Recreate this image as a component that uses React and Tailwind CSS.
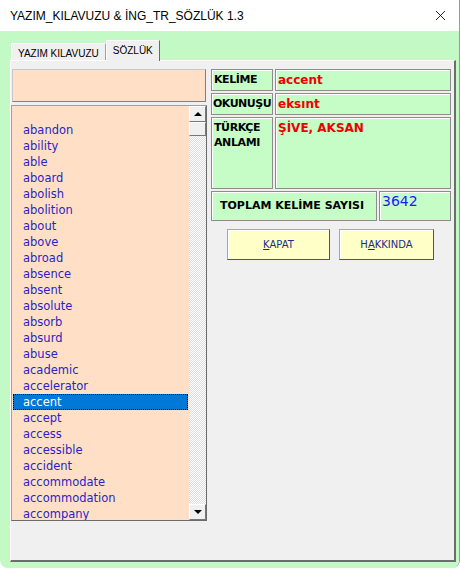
import { X } from 'lucide-react';

const words = [
  '',
  'abandon',
  'ability',
  'able',
  'aboard',
  'abolish',
  'abolition',
  'about',
  'above',
  'abroad',
  'absence',
  'absent',
  'absolute',
  'absorb',
  'absurd',
  'abuse',
  'academic',
  'accelerator',
  'accent',
  'accept',
  'access',
  'accessible',
  'accident',
  'accommodate',
  'accommodation',
  'accompany',
];

const tahoma = "font-['DejaVu_Sans',sans-serif]";

const Cell = ({ className = '', children }) => (
  <div
    className={`border border-[#8c8c8c] bg-[#c6fcc6] shadow-[inset_1px_1px_0_#ffffff] ${className}`}
  >
    {children}
  </div>
);

const WordList = () => (
  <div className="relative mt-[3px] h-[416px] w-[196px] overflow-hidden border border-[#a0a0a0] border-b-[#6a6a6a] border-r-[#6a6a6a] bg-[#ffe0c6]">
    <div className={`pl-[1px] pr-[18px] ${tahoma} text-[11.5px] leading-4 text-[#2a1fc9]`}>
      {words.map((word, index) => (
        <div
          key={`${word}-${index}`}
          className={
            word === 'accent'
              ? 'h-4 border border-dotted border-black bg-[#0078d7] pl-[9px] leading-[14px] text-white'
              : 'h-4 pl-[10px]'
          }
        >
          {word}
        </div>
      ))}
    </div>
    <div className="absolute right-0 top-0 flex h-full w-[17px] flex-col bg-[repeating-conic-gradient(#ffffff_0_25%,#dcdcdc_0_50%)] bg-[length:2px_2px]">
      <div className="flex h-[16px] items-center justify-center border border-white border-b-[#777] border-r-[#777] bg-[#f0f0f0]">
        <span className="h-0 w-0 border-x-[4px] border-b-[4px] border-x-transparent border-b-black" />
      </div>
      <div className="h-[14px] border border-white border-b-[#777] border-r-[#777] bg-[#f0f0f0]" />
      <div className="flex-1" />
      <div className="flex h-[16px] items-center justify-center border border-white border-b-[#777] border-r-[#777] bg-[#f0f0f0]">
        <span className="h-0 w-0 border-x-[4px] border-t-[4px] border-x-transparent border-t-black" />
      </div>
    </div>
  </div>
);

const Button = ({ width, hotkey, rest, before = '' }) => (
  <button
    type="button"
    className={`${width} h-[31px] border border-[#a8a8a8] border-b-[#555] border-r-[#555] bg-[#ffffc8] shadow-[inset_1px_1px_0_#ffffff] ${tahoma} text-[10px] text-[#1e2a8c]`}
  >
    {before}
    <span className="underline">{hotkey}</span>
    {rest}
  </button>
);

export default function App() {
  return (
    <div className="h-[569px] w-[460px] overflow-hidden bg-white">
      <div className="flex h-[568px] w-[460px] flex-col overflow-hidden rounded-b-[8px] border-r border-[#9a9a9a]">
        <div className="flex h-[31px] items-center justify-between bg-white pl-[10px] pr-[10px] font-['Liberation_Sans',sans-serif] text-[12px] text-black">
          <span>YAZIM_KILAVUZU &amp; İNG_TR_SÖZLÜK 1.3</span>
          <X size={17} strokeWidth={1.2} />
        </div>
        <div className="flex flex-1 flex-col bg-[#c2f9c4] pl-[10px] pr-[3px] pt-[9px] pb-[6px]">
          <div className="flex h-[20px] items-end font-['Liberation_Sans',sans-serif] text-[10px] text-black">
            <div className="ml-[1px] flex h-[17px] items-center border border-b-0 border-white border-r-[#a0a0a0] bg-[#f0f0f0] px-[6px] pt-[2px]">
              YAZIM KILAVUZU
            </div>
            <div className="relative -mb-[1px] flex h-[21px] items-start border border-b-0 border-white border-r-[#696969] bg-[#f0f0f0] px-[6px] pt-[2px]">
              SÖZLÜK
            </div>
          </div>
          <div className="flex flex-1 gap-[4px] border border-white border-b-2 border-r-2 border-b-[#6d6d6d] border-r-[#6d6d6d] bg-[#f0f0f0] pt-[8px]">
            <div className="flex flex-col">
              <div className="mx-[1px] h-[33px] border border-[#c8c8c8] border-b-[#808080] border-r-[#808080] bg-[#ffe0c6]" />
              <WordList />
            </div>
            <div className="flex w-[240px] flex-col">
              <div className={`flex flex-col gap-[2px] ${tahoma} text-[11px] font-bold`}>
                <div className="flex gap-[2px]">
                  <Cell className="h-[22px] w-[62px] pl-[2px] pt-[2px] tracking-[-0.4px]">KELİME</Cell>
                  <Cell className="h-[22px] flex-1 pl-[2px] pt-[1px] text-[12px] text-[#ee0000]">accent</Cell>
                </div>
                <div className="flex gap-[2px]">
                  <Cell className="h-[22px] w-[62px] overflow-hidden whitespace-nowrap pl-[1px] pt-[2px] tracking-[-0.5px]">OKUNUŞU</Cell>
                  <Cell className="h-[22px] flex-1 pl-[2px] pt-[1px] text-[12px] text-[#ee0000]">eksınt</Cell>
                </div>
                <div className="flex gap-[2px]">
                  <Cell className="h-[72px] w-[62px] pl-[2px] pt-[2px] leading-[15px] tracking-[-0.4px]">
                    TÜRKÇE
                    <br />
                    ANLAMI
                  </Cell>
                  <Cell className="h-[72px] flex-1 pl-[2px] pt-[1px] text-[12px] text-[#ee0000]">ŞİVE, AKSAN</Cell>
                </div>
                <div className="flex gap-[2px]">
                  <Cell className="flex h-[30px] w-[166px] items-center pl-[8px]">TOPLAM KELİME SAYISI</Cell>
                  <Cell className="h-[30px] flex-1 pl-[2px] text-[14px] font-normal leading-[18px] text-[#1a1aff]">3642</Cell>
                </div>
              </div>
              <div className="mt-[8px] flex gap-[9px] pl-[16px]">
                <Button width="w-[103px]" hotkey="K" rest="APAT" />
                <Button width="w-[95px]" before="H" hotkey="A" rest="KKINDA" />
              </div>
            </div>
          </div>
        </div>
      </div>
    </div>
  );
}
